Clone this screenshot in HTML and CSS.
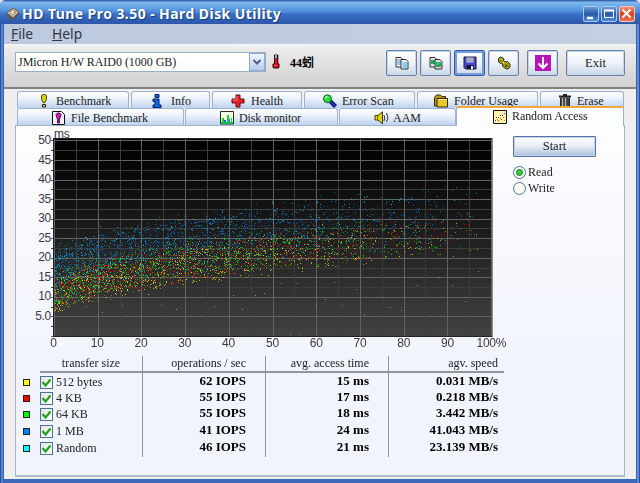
FILE: index.html
```html
<!DOCTYPE html>
<html lang="en">
<head>
<meta charset="utf-8">
<title>HD Tune Pro 3.50 - Hard Disk Utility</title>
<link rel="stylesheet" href="styles.css">
</head>
<body>
<div class="window">
  <header class="titlebar">
    <svg class="app-icon" width="14" height="14" viewBox="0 0 14 14"><path d="M1 6 7 1l6 4-6 6z" fill="#d0c5b5" stroke="#6d5b4b"/><path d="M1 7v3l6 3 6-6V5l-6 6z" fill="#67564a"/><circle cx="7" cy="5.5" r="2.4" fill="#f3e7d4" stroke="#a78a6a"/><path d="m7 6 4-2" stroke="#b84"/></svg>
    <h1 class="title">HD Tune Pro 3.50 - Hard Disk Utility</h1>
    <div class="caption-buttons">
      <span class="cap"><svg width="15" height="15"><path d="M3 11h6" stroke="#fff" stroke-width="2.4"/></svg></span>
      <span class="cap"><svg width="15" height="15"><path d="M2.500 3.500h9v7h-9z" fill="none" stroke="#fff"/><path d="M2 3.500h10" stroke="#fff" stroke-width="2"/></svg></span>
      <span class="cap close"><svg width="15" height="15"><path d="m2.500 2.500 8 8m0-8-8 8" stroke="#fff" stroke-width="2"/></svg></span>
    </div>
  </header>
  <nav class="menu"><span><u>F</u>ile</span><span><u>H</u>elp</span></nav>
  <div class="toolbar">
    <div class="combo"><span>JMicron H/W RAID0 (1000 GB)</span><span class="arrow"><svg width="10" height="8"><path d="m1.500 2 3.500 3.500L8.500 2" fill="none" stroke="#4d6185" stroke-width="2"/></svg></span></div>
    <svg class="thermo" width="8" height="15" viewBox="0 0 8 15"><path d="M2.500.5h3l.8.8V9l1.200 1.200v3L6.300 14.500H1.700L.5 13.200v-3L2 9V1z" fill="#23090b"/><path d="M3 1h1.800v3H3z" fill="#7dd9e4"/><path d="M3 4h2v5.500l1.300 1.200v2l-.8.800h-3l-.8-.8v-2L3 9.500z" fill="#f20a20"/><path d="M2.500 11h1v1h-1z" fill="#fff"/></svg>
    <span class="temp">44蚓</span>
    <div class="tools">
      <button class="tool"><svg width="16" height="16"><path d="M2 2.500h5l2 2V12H2z" fill="#fff" stroke="#333"/><path d="M3 5h4M3 7h4M3 9h4" stroke="#48b"/><path d="M7 4.500h5l2 2V14H7z" fill="#eef8ff" stroke="#333"/><path d="M8.500 8H13M8.500 10H13M8.500 12H13" stroke="#299ade"/></svg></button>
      <button class="tool"><svg width="16" height="16"><path d="M2 2.500h5l2 2V12H2z" fill="#ddd" stroke="#333"/><path d="M3 5h4v4H3z" fill="#16b35c"/><path d="M7 4.500h5l2 2V14H7z" fill="#ddd" stroke="#333"/><path d="M8 7h5v5H8z" fill="#16b34c"/><path d="M9 7h2v3H9z" fill="#2cb9ea"/><path d="M11 11h2v1h-2z" fill="#e42"/></svg></button>
      <button class="tool active"><svg width="16" height="16"><path d="M2 2h12v12H3.500L2 12.500z" fill="#4747d2" stroke="#16163c"/><path d="M4.500 2.500h7v5h-7z" fill="#c7cbd0"/><path d="M5 4h6M5 6h6" stroke="#8b929c"/><path d="M4.500 10h7v4h-7z" fill="#15152b"/><path d="M9 11h2v3H9z" fill="#eee"/></svg></button>
      <button class="tool"><svg width="16" height="16"><path d="M2.500 3.500 4 2l2 .5 2 1.500-.5 2 2.500 1 1.500-.5 2.500 2.500v3L12 14l-3-.5L6.500 11l.5-2-2.500-.500L2.500 7z" fill="#aaa01c" stroke="#35320b"/><path d="m4.500 4.500 7 7" stroke="#e2d862" stroke-width="1.500" stroke-dasharray="2 1.500"/><path d="M9 9.500h2.500V12H9z" fill="#57510e"/><path d="M4 5h1.500v1.500H4z" fill="#57510e"/></svg></button>
      <button class="tool down"><svg width="16" height="16"><path d="M0 0h16v16H0z" fill="#b913ba"/><path d="M8 2v11M3.500 8.500 8 13l4.500-4.500" fill="none" stroke="#fff" stroke-width="2"/></svg></button>
      <button class="tool exit">Exit</button>
    </div>
  </div>
  <main class="body">
    <div class="tabs">
      <div class="tab-row first">
        <div class="tab t-bench"><svg width="8" height="14"><path d="M1.500 1.500 3 .5h2l1.500 1V5L5 8.500H3L1.500 5z" fill="#d9cf11" stroke="#54520b"/><path d="M2.500 10.500h3v2.500h-3z" fill="#d9cf11" stroke="#222"/></svg>Benchmark</div>
        <div class="tab t-info"><svg width="10" height="14"><path d="M3 .5h4v3H3zM1 5h6v6h2v2.500H1V11h2V7.500H1z" fill="#086be8" stroke="#061b58"/></svg>Info</div>
        <div class="tab t-health"><svg width="14" height="14"><path d="M5 1h4v4h4v4H9v4H5V9H1V5h4z" fill="#e1222a" stroke="#6d0b0c"/><path d="M6 2v4H2" stroke="#ff7b75" fill="none"/></svg>Health</div>
        <div class="tab t-scan"><svg width="15" height="14"><path d="m8 7 5.500 5.500" stroke="#080a62" stroke-width="4"/><path d="m8.500 7.500 4.500 4.500" stroke="#2442e5" stroke-width="1.500"/><circle cx="5.500" cy="4.800" r="4" fill="#22df3b" stroke="#186422"/><path d="M3.500 4.500q.5-2 2-2" stroke="#cfffca" stroke-width="1.300" fill="none"/></svg>Error Scan</div>
        <div class="tab t-folder"><svg width="14" height="14"><path d="M.5 3.500 2.500 1h4L8 2.500h3.500V12H.5z" fill="#b99710" stroke="#332b08"/><path d="M3 4.500h10.500V13H3z" fill="#e8c728" stroke="#332b08"/><path d="M4 5.500h8" stroke="#fff19a"/></svg>Folder Usage</div>
        <div class="tab t-erase"><svg width="12" height="14"><path d="M4 1h4M0 2.500h12" stroke="#222" stroke-width="2"/><path d="M1.500 4h9v9.500h-9z" fill="#444" stroke="#222"/><path d="M3.500 4v9M6.500 4v9" stroke="#b7b7b7" stroke-width="1.200"/></svg>Erase</div>
      </div>
      <div class="tab-row second">
        <div class="tab t-file"><svg width="13" height="14"><path d="M.5.500h9l3 3v10H.5z" fill="#f3eff3" stroke="#111"/><path d="M4 3.500 5.500 2h2L9 3.500 7.500 8.500h-2zM5.500 9.500h2V12h-2z" fill="#d316cf" stroke="#4b064c"/></svg>File Benchmark</div>
        <div class="tab t-disk"><svg width="14" height="14"><path d="M.5.500h13v12.500H.5z" fill="#f8ffe1" stroke="#262b26"/><path d="M2 13V7h2v6M7 13V4h2v9M11 13V7h1v6" fill="#18d332"/><path d="M4 13V9h2v4M9 13V8h1v5" fill="#1267e1"/><path d="M1 12h12" stroke="#18b951" stroke-width="2"/></svg>Disk monitor</div>
        <div class="tab t-aam"><svg width="15" height="14"><path d="M1 4.500h3L8.500.8v12L4 9H1z" fill="#e2d512" stroke="#3a370b"/><path d="M3.500 4.500V9" stroke="#7a7312"/><path d="M10 4q1.500 3 0 6M12.500 2q3 5 0 9" stroke="#333" fill="none"/></svg>AAM</div>
        <div class="tab t-random"><svg width="14" height="14"><path d="M.5.500h13v13H.5z" fill="#fff3ae" stroke="#171408"/><path d="M2 10h1v1H2zM5 7h1v1H5zM7 5h1v1H7zM11 3h1v1h-1z" fill="#24f"/><path d="M3 7h1v1H3zM5 10h1v1H5zM8 9h1v1H8zM9 5h1v1H9z" fill="#e11"/><path d="M4 9h1v1H4zM7 8h1v1H7zM10 7h1v1h-1zM11 10h1v1h-1z" fill="#d78b19"/></svg>Random Access</div>
      </div>
    </div>
    <section class="panel">
      <div class="left">
        <div class="chart">
          <div class="y-axis"><span>50</span><span>45</span><span>40</span><span>35</span><span>30</span><span>25</span><span>20</span><span>15</span><span>10</span><span>5.0</span></div>
          <div class="plot-wrap">
            <div class="unit">ms</div>
            <canvas id="plot" width="444" height="200"></canvas>
            <div class="x-axis"><span>0</span><span>10</span><span>20</span><span>30</span><span>40</span><span>50</span><span>60</span><span>70</span><span>80</span><span>90</span><span>100%</span></div>
          </div>
        </div>
        <div class="results">
          <div class="row head"><i></i><span class="name">transfer size</span><span>operations / sec</span><span>avg. access time</span><span class="last">agv. speed</span></div>
          <div class="row"><i class="key yellow"></i><label class="name"><b class="check"><svg width="11" height="11"><path d="m1.500 5 3 3.500 5-6" fill="none" stroke="#21a121" stroke-width="2.200"/></svg></b>512 bytes</label><span>62 IOPS</span><span>15 ms</span><span class="last">0.031 MB/s</span></div>
          <div class="row"><i class="key red"></i><label class="name"><b class="check"><svg width="11" height="11"><path d="m1.500 5 3 3.500 5-6" fill="none" stroke="#21a121" stroke-width="2.200"/></svg></b>4 KB</label><span>55 IOPS</span><span>17 ms</span><span class="last">0.218 MB/s</span></div>
          <div class="row"><i class="key green"></i><label class="name"><b class="check"><svg width="11" height="11"><path d="m1.500 5 3 3.500 5-6" fill="none" stroke="#21a121" stroke-width="2.200"/></svg></b>64 KB</label><span>55 IOPS</span><span>18 ms</span><span class="last">3.442 MB/s</span></div>
          <div class="row"><i class="key blue"></i><label class="name"><b class="check"><svg width="11" height="11"><path d="m1.500 5 3 3.500 5-6" fill="none" stroke="#21a121" stroke-width="2.200"/></svg></b>1 MB</label><span>41 IOPS</span><span>24 ms</span><span class="last">41.043 MB/s</span></div>
          <div class="row"><i class="key cyan"></i><label class="name"><b class="check"><svg width="11" height="11"><path d="m1.500 5 3 3.500 5-6" fill="none" stroke="#21a121" stroke-width="2.200"/></svg></b>Random</label><span>46 IOPS</span><span>21 ms</span><span class="last">23.139 MB/s</span></div>
        </div>
      </div>
      <aside class="side">
        <button class="start">Start</button>
        <label class="radio"><i class="dot on"></i>Read</label>
        <label class="radio"><i class="dot"></i>Write</label>
      </aside>
    </section>
  </main>
</div>
<script src="plot.js"></script>
</body>
</html>
```
FILE: styles.css
```css
* { box-sizing: border-box; }
body { margin: 0; width: 640px; height: 483px; overflow: hidden; background: #dfe3ea; font: 12px "Liberation Serif", "Noto Sans CJK TC", serif; color: #222; }
button { font: inherit; color: inherit; padding: 0; }
svg { display: block; flex: none; }
.window { width: 640px; height: 483px; padding: 0 4px 4px; display: flex; flex-direction: column; border-radius: 6px 6px 0 0; background: linear-gradient(90deg, #2850a0 0 1px, #5485d3 1px 3px, #3960b0 3px 4px, #3d6abb 4px 636px, #3960b0 636px 637px, #5c8cd8 637px 639px, #2850a0 639px); overflow: hidden; }
.titlebar { height: 24px; flex: none; margin: 0 -4px; padding: 3px 5px 0 6px; display: flex; align-items: center; background: linear-gradient(#3867b0 0, #3867b0 1px, #80b9ec 2px, #6aaae8 6px, #4c8bd8 12px, #3a70c6 14px, #3060b4 20px, #2d56a8 24px); }
.title { margin: 0 0 0 2px; font: bold 14px/20px "Noto Sans", sans-serif; color: #fff; text-shadow: 1px 1px 1px #183b7c; white-space: nowrap; letter-spacing: .43px; }
.caption-buttons { margin-left: auto; display: flex; gap: 2px; }
.cap { width: 16px; height: 16px; border: 1px solid #a6caf0; border-radius: 2px; background: linear-gradient(#6d9edb, #2859a9 50%, #4d8bd3); overflow: hidden; }
.close { border-color: #f0c5b9; background: linear-gradient(#ef9177, #d64121 50%, #ed7551); }
.menu { height: 20px; flex: none; padding-left: 7px; display: flex; gap: 19px; background: linear-gradient(90deg, #bcc9df, #c5cfe2); font: 13.800px/20px "Noto Sans", sans-serif; color: #303540; }
.menu u { text-underline-offset: 1px; }
.toolbar { height: 45px; flex: none; display: flex; padding: 6px 12px 0 11px; background: linear-gradient(#f5f5f5, #ececec 4px, #d1d1d1); border-bottom: 2px solid #818181; }
.combo { width: 251px; height: 20px; margin-top: 2px; padding-left: 2px; display: flex; justify-content: space-between; align-items: center; background: #fff; border: 1px solid #9aaec8; line-height: 18px; letter-spacing: -.03px; }
.arrow { width: 16px; height: 18px; display: grid; place-items: center; background: linear-gradient(#f0f6fe, #b7cdea); border: 1px solid #8ea9cc; }
.thermo { margin: 4px 0 0 6px; }
.temp { margin: 4px 0 0 10px; font: bold 12px/18px "Liberation Serif", "Noto Sans CJK TC", serif; color: #000; width: 28px; white-space: nowrap; }
.tools { margin-left: auto; display: flex; gap: 3px; }
.tool { width: 31px; height: 26px; display: grid; place-items: center; border: 1px solid #6681ac; border-radius: 2px; background: linear-gradient(#fdfeff, #eef3fa 50%, #ccd7e7); box-shadow: inset 0 0 0 1px #c8d4e6; }
.tool.active { border-color: #305caa; box-shadow: inset 0 0 0 2px #749bdb; }
.down { margin-left: 5px; }
.exit { width: 59px; margin-left: 5px; font-size: 12.500px; }
.tools { margin-right: -1px; }
.body { flex: 1; background: #efefef; padding: 2px 11px 3px; min-height: 0; display: flex; flex-direction: column; }
.tabs { width: 611px; height: 34px; flex: none; }
.tab-row { display: flex; padding: 0 1px 0 2px; }
.first { height: 17px; gap: 2px; }
.second { height: 17px; gap: 1px; }
.tab { height: 17px; display: flex; align-items: center; flex: none; gap: 6px; white-space: nowrap; border: 1px solid #9fb2d0; border-bottom: 0; border-radius: 3px 3px 0 0; background: linear-gradient(#fff, #e9f0fb 45%, #bdd2ef); line-height: 17px; padding-top: 2px; }
.t-bench { width: 112px; padding-left: 22px; gap: 8px; }
.t-info { width: 79px; padding-left: 20px; gap: 9px; }
.t-health { width: 90px; padding-left: 18px; }
.t-scan { width: 111px; padding-left: 17px; gap: 5px; }
.t-folder { width: 121px; padding-left: 16px; }
.t-erase { width: 84px; padding-left: 18px; gap: 6px; }
.t-file { width: 167px; padding-left: 34px; }
.t-disk { width: 153px; padding-left: 34px; letter-spacing: -.15px; gap: 5px; }
.t-aam { width: 117px; padding-left: 34px; gap: 4px; }
.t-random { width: 168px; height: 20px; margin: -2px 0 -1px -1px; padding: 0 0 1px 36px; gap: 5px; border-top: 2px solid #f0a83a; background: #fcfdff; letter-spacing: -.1px; position: relative; }
.panel { width: 610px; height: 352px; flex: none; display: flex; border: 1px solid #a3b3c9; border-bottom: 2px solid #afbccd; background: linear-gradient(#fdfdff, #f1f4fc 70%, #f1f4fc); }
.left { width: 488px; margin-left: 1px; }
.chart { display: flex; height: 226px; }
.y-axis { width: 34px; padding-top: 5px; display: flex; flex-direction: column; text-align: right; font: 12px "Liberation Sans", sans-serif; letter-spacing: -.3px; color: #403548; }
.y-axis span { height: 19.550px; line-height: 19.550px; }
.plot-wrap { width: 450px; font: 12px "Liberation Sans", sans-serif; letter-spacing: -.2px; color: #403548; }
.unit { height: 12px; line-height: 16px; padding-left: 3px; }
#plot { display: block; }
.x-axis { display: grid; grid-template-columns: repeat(11, 43.800px); margin-left: -19.500px; width: 482px; line-height: 11px; text-align: center; }
.results { margin: 4px 0 0 5px; width: 482px; }
.row { display: grid; grid-template-columns: 18px 103px 123px 123px 115px; height: 17px; font-weight: bold; font-size: 13px; color: #000; }
.row:nth-child(2), .row:nth-child(3) { height: 16px; }
.row > span { text-align: right; padding-right: 19px; border-right: 1.500px solid #929498; line-height: 15px; white-space: nowrap; }
.row > .last { border: 0; padding-right: 6px; }
.row .name { display: flex; align-items: center; gap: 3px; font-size: 12px; font-weight: normal; border-right: 1.500px solid #929498; padding: 1px 0 0; line-height: 17px; color: #222; }
.row.head { height: 17px; font-size: 12px; font-weight: normal; color: #222; }
.head > span { border-bottom: 2px solid #929498; }
.row.head > .last { border-bottom: 2px solid #929498; }
.row.head .name { justify-content: center; padding: 0; line-height: 15px; }
.key { width: 7px; height: 7px; border: 1px solid #222; align-self: center; margin-left: 1px; }
.yellow { background: #ff0; }
.red { background: #f00; }
.green { background: #0f0; }
.blue { background: #0080ff; }
.cyan { background: #0ff; }
.check { width: 13px; height: 13px; border: 1px solid #4c7197; background: linear-gradient(135deg, #e4e4df, #fff); flex: none; }
.side { padding: 10px 0 0 8px; }
.start { display: block; width: 83px; height: 21px; font-size: 12.500px; border: 1px solid #5474aa; border-radius: 1px; background: linear-gradient(#fff, #e9eff8 45%, #aebfd9); box-shadow: inset 0 0 0 1px #c6d4e9; margin-bottom: 7px; }
.radio { display: flex; align-items: center; gap: 2px; height: 16px; }
.dot { width: 13px; height: 13px; border-radius: 50%; border: 1px solid #4c7197; background: #fbfbf8; }
.on { background: radial-gradient(circle, #4ec44b 0 1px, #21a121 3px, #fbfbf8 4px); }
```
FILE: plot.js
```javascript
const c = document.getElementById('plot').getContext('2d');
const W = 442, H = 199, X0 = 3, BOTTOM = 198;
const bg = c.createLinearGradient(0, 0, 0, H);
bg.addColorStop(0, '#000');
bg.addColorStop(0.25, '#0d0d0d');
bg.addColorStop(1, '#424242');
c.fillStyle = bg;
c.fillRect(2, 0, W - 2, H);
for (let i = 0; i <= 20; i++) {
  c.fillStyle = i % 2 ? '#3c3c3c' : '#636363';
  c.fillRect(Math.round(X0 + i * 21.85), 1, 1, H - 2);
  c.fillRect(0, Math.round(BOTTOM - i * 9.78), W - 2, 1);
}
let seed = 4217;
const rnd = () => {
  seed = (seed + 0x6d2b79f5) | 0;
  let t = Math.imul(seed ^ (seed >>> 15), 1 | seed);
  t = (t + Math.imul(t ^ (t >>> 7), 61 | t)) ^ t;
  return ((t ^ (t >>> 14)) >>> 0) / 4294967296;
};
const plot = (x, ms) => c.fillRect(Math.round(X0 + x * 4.37), Math.round(BOTTOM - ms * 3.91), 1, 1);
// Colour, offset and spread above the base latency curve (ms).
const series = [
  ['#0074e0', 7.5, 8.5],
  ['#00c0d8', 3, 14],
  ['#e8d800', 0, 8.5],
  ['#f00000', 1.2, 8.5],
  ['#00e000', 1.4, 8.8]
];
for (let i = 0; i < 1000; i++) {
  for (const [color, offset, spread] of series) {
    const x = 99 * (1 - Math.sqrt(1 - rnd()));
    const slow = rnd() < 0.12 ? rnd() * 3 : 0;
    const ms = 4.6 + offset + 1.35 * Math.pow(x, 0.55) + rnd() * spread + slow + (rnd() + rnd() - 1) * 1.2;
    c.globalAlpha = 0.35 + rnd() * 0.6;
    c.fillStyle = color;
    plot(x, ms);
  }
}
// Isolated quick reads below the main band.
const outliers = [[11, 6.2], [15.5, 8], [24.5, 8], [28, 6.8], [36.5, 7.8], [41, 10.5], [43, 7], [46, 10.5], [48, 11], [52, 13.5], [55.5, 13.5], [60, 8], [62, 9.5], [64, 13.7], [66, 8], [69, 12], [71, 5.6], [75, 10], [77, 7.3], [79.5, 6.7], [83, 13], [88, 15], [91, 13], [94, 9], [97, 16.5], [56, 0.4], [54, 0.5]];
c.globalAlpha = 0.8;
c.fillStyle = '#bdb51c';
for (const [x, ms] of outliers) plot(x, ms);
c.globalAlpha = 1;
c.strokeStyle = '#222';
c.strokeRect(2.5, 0.5, W - 3, H - 1);
c.fillStyle = '#888';
c.fillRect(W - 1, 0, 1, H);
```
